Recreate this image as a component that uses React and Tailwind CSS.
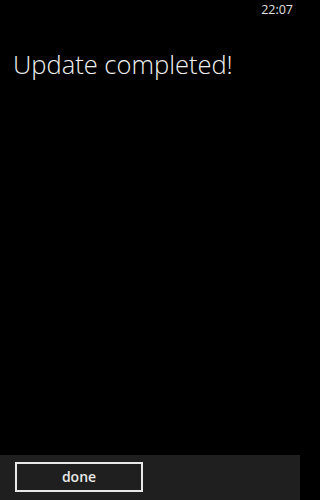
export default function App() {
  return (
    <div className="w-full min-h-[500px] bg-black">
      <div className="w-[300px] h-[500px] bg-black text-white flex flex-col" style={{ fontFamily: '"Open Sans", "Noto Sans", sans-serif' }}>
        <div className="h-[20px] flex items-center justify-end pr-[7px] text-[12.5px] text-[#e0e0e0]">
          22:07
        </div>
        <div className="flex-1 px-[13px] pt-[27px]">
          <h1 className="text-[25.5px] font-light leading-[34px] text-[#f0f0f0]">Update completed!</h1>
        </div>
        <div className="h-[45px] bg-[#1f1f1f] flex items-start pl-[15px] pt-[7px]">
          <button className="w-[128px] h-[30px] border-2 border-[#e8e8e8] text-[14px] font-semibold text-[#e8e8e8] flex items-center justify-center leading-none">
            done
          </button>
        </div>
      </div>
    </div>
  );
}
